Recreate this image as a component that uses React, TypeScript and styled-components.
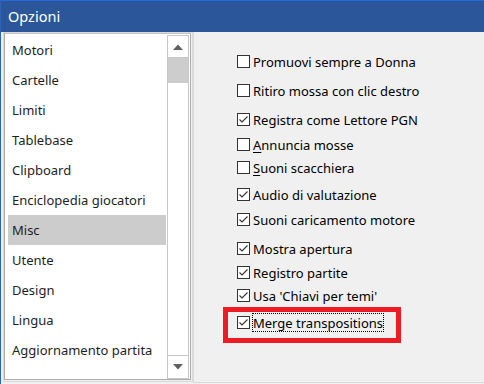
import React from "react";
import styled, { createGlobalStyle } from "styled-components";

const GlobalStyle = createGlobalStyle`
  html, body {
    margin: 0;
    padding: 0;
    background: #f0f0f0;
  }
  body {
    font-family: "Noto Sans", "Open Sans", sans-serif;
  }
`;

const Window = styled.div`
  width: 484px;
  height: 384px;
  display: flex;
  flex-direction: column;
  background: #f0f0f0;
  border-left: 1px solid #2b63b8;
  box-sizing: border-box;
  overflow: hidden;
`;

const TitleBar = styled.div`
  height: 32px;
  flex: none;
  background: #2b579a;
  border-top: 1px solid #2a6ad6;
  box-sizing: border-box;
  display: flex;
  align-items: center;
  padding: 0 0 1px 7px;
  color: #ffffff;
  font-size: 14.5px;
`;

const Body = styled.div`
  flex: 1;
  display: flex;
  min-height: 0;
`;

const LeftPane = styled.div`
  width: 192px;
  flex: none;
  display: flex;
  padding: 0 0 2px 2px;
  box-sizing: border-box;
`;

const ListFrame = styled.div`
  flex: 1;
  display: flex;
  border: 1px solid #d9d9d9;
  padding: 0 1px 1px 0;
`;

const ListBox = styled.div`
  flex: 1;
  display: flex;
  background: #ffffff;
  border: 1px solid #adadad;
  border-top-color: #c4c4c4;
`;

const Items = styled.div`
  flex: 1;
  display: flex;
  flex-direction: column;
  padding: 1px 1px 0 3px;
`;

const Item = styled.div<{ $selected?: boolean }>`
  height: 30px;
  display: flex;
  align-items: center;
  padding-left: 4px;
  font-size: 13px;
  color: #1e1e1e;
  white-space: nowrap;
  background: ${(p) => (p.$selected ? "#cccccc" : "transparent")};
`;

const ScrollBar = styled.div`
  width: 23px;
  flex: none;
  display: flex;
  flex-direction: column;
  padding: 1px 1px 0 0;
  box-sizing: border-box;
`;

const ScrollTrack = styled.div`
  flex: 1;
  display: flex;
  flex-direction: column;
  border: 1px solid #c8c8c8;
  border-top: none;
  border-bottom: none;
`;

const ArrowButton = styled.div<{ $h: number }>`
  height: ${(p) => p.$h}px;
  flex: none;
  display: flex;
  align-items: center;
  justify-content: center;
  border: 1px solid #c8c8c8;
  margin: 0 -1px;
  background: #ffffff;
`;

const Thumb = styled.div`
  height: 25px;
  flex: none;
  background: #cdcdcd;
`;

const Spacer = styled.div`
  flex: 1;
`;

const RightPane = styled.div`
  flex: 1;
  display: flex;
  flex-direction: column;
  align-items: flex-start;
  padding: 20px 0 0 43px;
  border-left: 1px solid #dcdcdc;
  border-bottom: 1px solid #dadada;
  margin-bottom: 1px;
`;

const Row = styled.label<{ $gap: number }>`
  height: 19px;
  display: flex;
  align-items: center;
  margin-top: ${(p) => p.$gap}px;
  font-size: 13px;
  color: #000000;
  white-space: nowrap;
`;

const Box = styled.span`
  width: 13px;
  height: 13px;
  box-sizing: border-box;
  border: 1px solid #333333;
  background: #ffffff;
  display: flex;
  align-items: center;
  justify-content: center;
  margin-right: 4px;
  flex: none;
`;

const Label = styled.span<{ $focus?: boolean }>`
  height: 19px;
  display: flex;
  align-items: center;
  box-sizing: border-box;
  padding: 0 1px 0 1px;
  margin-left: -2px;
  outline: ${(p) => (p.$focus ? "1px dotted #000000" : "none")};
  outline-offset: -1px;
  u {
    text-decoration: underline;
    text-underline-offset: 2px;
  }
`;

const Highlight = styled.div`
  margin: 2px 0 0 -14px;
  padding: 1px 12px 6px 9px;
  border: 5px solid #ed1c24;
  display: flex;
`;

const Check = () => (
  <svg width="11" height="11" viewBox="0 0 11 11">
    <polyline points="1.5,5.5 4,8 9.5,2.5" fill="none" stroke="#333333" strokeWidth="1.1" />
  </svg>
);

const Arrow = ({ up }: { up?: boolean }) => (
  <svg width="10" height="6" viewBox="0 0 10 6">
    <polygon points={up ? "0,6 5,0.5 10,6" : "0,0 10,0 5,5.5"} fill="#606060" />
  </svg>
);

const sections = [
  "Motori",
  "Cartelle",
  "Limiti",
  "Tablebase",
  "Clipboard",
  "Enciclopedia giocatori",
  "Misc",
  "Utente",
  "Design",
  "Lingua",
  "Aggiornamento partita",
];

type Opt = { label: React.ReactNode; checked: boolean; gap: number };

const options: Opt[] = [
  { label: "Promuovi sempre a Donna", checked: false, gap: 0 },
  { label: "Ritiro mossa con clic destro", checked: false, gap: 10 },
  { label: "Registra come Lettore PGN", checked: true, gap: 10 },
  { label: <><u>A</u>nnuncia mosse</>, checked: false, gap: 6 },
  { label: <><u>S</u>uoni scacchiera</>, checked: false, gap: 4 },
  { label: "Audio di valutazione", checked: true, gap: 8 },
  { label: "Suoni caricamento motore", checked: true, gap: 6 },
  { label: "Mostra apertura", checked: true, gap: 10 },
  { label: "Registro partite", checked: true, gap: 5 },
  { label: "Usa 'Chiavi per temi'", checked: true, gap: 4 },
];

export default function App() {
  return (
    <>
      <GlobalStyle />
      <Window>
        <TitleBar>Opzioni</TitleBar>
        <Body>
          <LeftPane>
            <ListFrame>
              <ListBox>
                <Items>
                  {sections.map((s) => (
                    <Item key={s} $selected={s === "Misc"}>
                      {s}
                    </Item>
                  ))}
                </Items>
                <ScrollBar>
                  <ScrollTrack>
                    <ArrowButton $h={21}>
                      <Arrow up />
                    </ArrowButton>
                    <Thumb />
                    <Spacer />
                    <ArrowButton $h={22}>
                      <Arrow />
                    </ArrowButton>
                  </ScrollTrack>
                </ScrollBar>
              </ListBox>
            </ListFrame>
          </LeftPane>
          <RightPane>
            {options.map((o, i) => (
              <Row key={i} $gap={o.gap}>
                <Box>{o.checked && <Check />}</Box>
                <Label>{o.label}</Label>
              </Row>
            ))}
            <Highlight>
              <Row $gap={0}>
                <Box>
                  <Check />
                </Box>
                <Label $focus>Merge transpositions</Label>
              </Row>
            </Highlight>
          </RightPane>
        </Body>
      </Window>
    </>
  );
}
